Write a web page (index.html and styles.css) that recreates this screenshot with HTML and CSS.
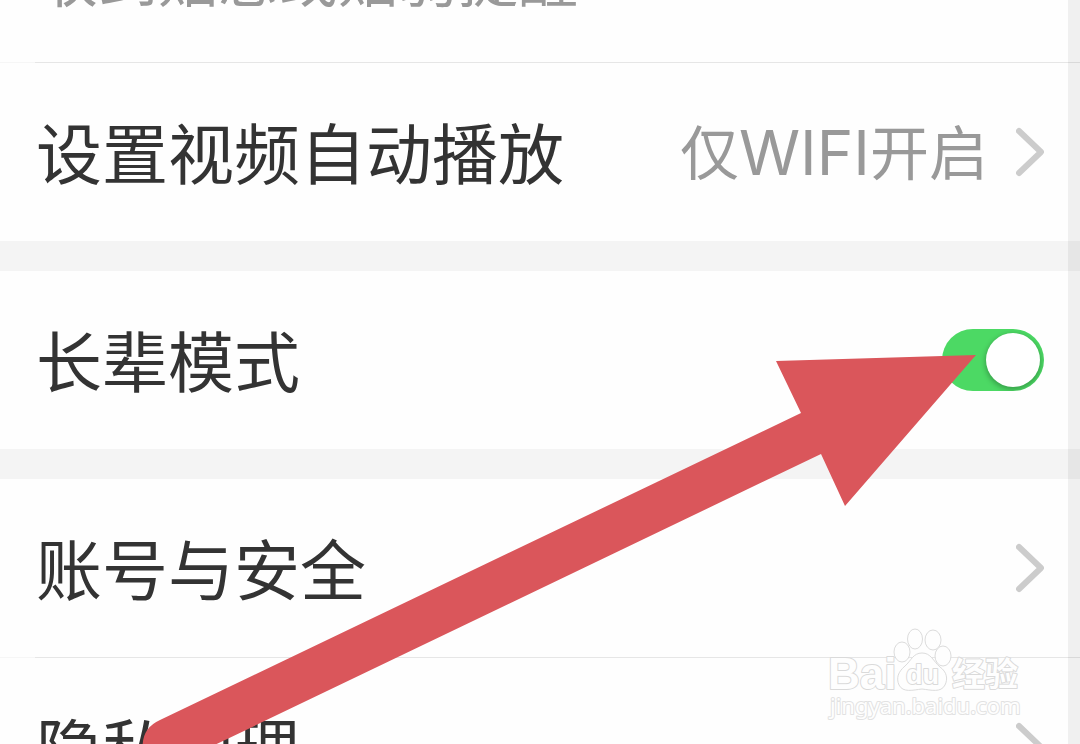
FILE: index.html
```html
<!DOCTYPE html>
<html lang="zh-CN">
<head>
<meta charset="UTF-8">
<meta name="viewport" content="width=device-width, initial-scale=1">
<title>设置</title>
<link rel="stylesheet" href="styles.css">
</head>
<body>
<main class="screen">
  <section class="group">
    <div class="note"><p class="note-text">收到贴息或贴弱提醒</p></div>
    <button class="row divided" type="button">
      <span class="label">设置视频自动播放</span>
      <span class="value">仅<span class="latin">WIFI</span>开启</span>
      <svg class="chevron" viewBox="0 0 28 50" aria-hidden="true"><path d="M3 4 L25 25 L3 46"/></svg>
    </button>
  </section>
  <section class="group">
    <div class="row">
      <label class="label" for="elder">长辈模式</label>
      <input class="switch" id="elder" type="checkbox" checked>
    </div>
  </section>
  <section class="group">
    <button class="row" type="button">
      <span class="label">账号与安全</span>
      <svg class="chevron" viewBox="0 0 28 50" aria-hidden="true"><path d="M3 4 L25 25 L3 46"/></svg>
    </button>
    <button class="row divided" type="button">
      <span class="label">隐私管理</span>
      <svg class="chevron" viewBox="0 0 28 50" aria-hidden="true"><path d="M3 4 L25 25 L3 46"/></svg>
    </button>
  </section>
  <div class="scroll-edge"></div>
  <svg class="watermark" viewBox="0 0 210 110" aria-hidden="true">
    <g class="outline">
      <ellipse cx="82" cy="32" rx="8" ry="10"/>
      <ellipse cx="95" cy="19" rx="7.5" ry="10"/>
      <ellipse cx="113" cy="20" rx="8" ry="10"/>
      <ellipse cx="123" cy="36" rx="8" ry="10"/>
      <path d="M102 33 C111 33 113 41 120 47 C127 52 128 59 125 65 C121 73 111 70 102 69 C93 70 83 73 79 65 C76 58 78 52 85 46 C91 41 93 33 102 33 Z"/>
    </g>
    <text class="mark brand" x="8" y="69">Bai</text>
    <text class="mark du" x="86" y="64">du</text>
    <text class="mark brand-cn" x="132" y="66">经验</text>
    <text class="mark site" x="10" y="94">jingyan.baidu.com</text>
  </svg>
  <svg class="arrow" viewBox="0 0 1080 744" aria-hidden="true">
    <path d="M976 355 L845 506 L821 454 L200 752 L143 752 Q140 729 160 720 L801 413 L776 361 Z"/>
  </svg>
</main>
</body>
</html>
```
FILE: styles.css
```css
* { box-sizing: border-box; }
body {
  margin: 0;
  background: #f4f4f4;
  font-family: "Noto Sans CJK SC", sans-serif;
  color: #333;
}
.screen {
  position: relative;
  display: flex;
  flex-direction: column;
  gap: 30px;
  height: 100vh;
  overflow: hidden;
}
.group { flex: none; background: #fefefe; }
.note {
  display: flex;
  align-items: flex-end;
  height: 62px;
  padding: 0 38px 56px;
}
.note-text {
  margin: 0;
  font-size: 60px;
  line-height: 60px;
  color: #999;
}
.row {
  display: flex;
  align-items: center;
  width: 100%;
  min-height: 178px;
  padding: 0 36px;
  border: 0;
  background: transparent;
  font: inherit;
  color: inherit;
  text-align: left;
}
.divided {
  min-height: 179px;
  border-top: 1px solid;
  border-image: linear-gradient(to right, #f6f6f6 36px, #e6e6e6 36px) 1;
}
.label {
  flex: 1;
  padding-bottom: 4px;
  font-size: 66px;
  line-height: 96px;
}
.value {
  margin-right: 28px;
  padding-bottom: 4px;
  font-size: 59px;
  line-height: 88px;
  color: #999;
}
.latin { font-family: Inter, "Liberation Sans", sans-serif; font-size: 62px; line-height: 1; }
.chevron {
  flex: none;
  width: 28px;
  height: 50px;
  fill: none;
  stroke: #ccc;
  stroke-width: 6;
  stroke-linecap: round;
  stroke-linejoin: round;
}
.switch {
  appearance: none;
  flex: none;
  display: flex;
  align-items: center;
  justify-content: flex-end;
  width: 102px;
  height: 62px;
  margin: 0;
  padding: 0 4px;
  border-radius: 31px;
  background: #4cd964;
  overflow: hidden;
}
.switch::before {
  content: "";
  width: 54px;
  height: 54px;
  border-radius: 50%;
  background: #fff;
  box-shadow: 0 2px 5px 1px rgba(0, 0, 0, 0.25);
}
.scroll-edge {
  position: absolute;
  top: 0;
  right: 0;
  bottom: 0;
  width: 12px;
  background: rgba(0, 0, 0, 0.055);
}
.arrow {
  position: absolute;
  top: 0;
  left: 0;
  width: 100%;
  fill: #da565b;
}
.watermark {
  position: absolute;
  right: 50px;
  bottom: 14px;
  width: 210px;
  height: 110px;
}
.outline { fill: #fefefe; stroke: #dcdcdc; stroke-width: 1; }
.mark {
  fill: #fefefe;
  stroke: #dadada;
  stroke-width: 2;
  stroke-linejoin: round;
  paint-order: stroke;
  font-family: "Noto Sans", sans-serif;
}
.brand { font-family: "Liberation Sans", sans-serif; font-weight: 700; font-size: 44px; }
.du { font-family: "Liberation Sans", sans-serif; font-weight: 700; font-size: 27px; }
.brand-cn { font-family: "Noto Sans CJK SC", sans-serif; font-weight: 700; font-size: 33px; }
.site { font-size: 22px; stroke: #e2e2e2; }
```
